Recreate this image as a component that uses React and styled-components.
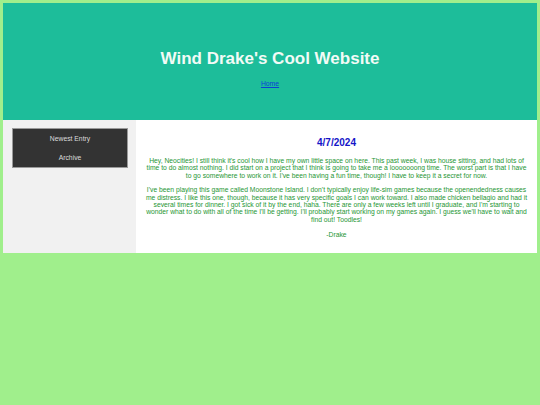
import React from "react";
import styled, { createGlobalStyle } from "styled-components";

const GlobalStyle = createGlobalStyle`
  html, body {
    margin: 0;
    padding: 0;
    background: #a0ef8c;
    font-family: "Liberation Sans", Arial, sans-serif;
  }
`;

const Page = styled.div`
  margin: 3px;
  width: 534px;
  box-sizing: border-box;
`;

const Header = styled.header`
  height: 117px;
  background: #1dbd9a;
  display: flex;
  flex-direction: column;
  align-items: center;
  box-sizing: border-box;
  padding-top: 46px;
`;

const Title = styled.h1`
  margin: 0;
  font-size: 17px;
  line-height: 20px;
  font-weight: bold;
  color: #f2fbf6;
`;

const HomeLink = styled.a`
  margin-top: 11px;
  font-size: 6.8px;
  line-height: 8px;
  color: #0a3fd6;
  text-decoration: underline;
`;

const Body = styled.div`
  display: flex;
`;

const Sidebar = styled.aside`
  width: 133px;
  flex-shrink: 0;
  background: #f1f1f1;
  box-sizing: border-box;
  padding: 8px 8px 0 9px;
`;

const NavBox = styled.nav`
  background: #333333;
  border: 1px solid #9a9a9a;
  display: flex;
  flex-direction: column;
  align-items: center;
  padding: 6px 0 5px;
  gap: 11px;
`;

const NavItem = styled.a`
  font-size: 6.8px;
  line-height: 8px;
  color: #dcdcdc;
  text-decoration: none;
`;

const Main = styled.main`
  flex: 1;
  background: #ffffff;
  padding: 17px 9px 14px;
  text-align: center;
`;

const EntryDate = styled.h2`
  margin: 0 0 8px;
  font-size: 10px;
  line-height: 12px;
  font-weight: bold;
  color: #1515c8;
`;

const Para = styled.p`
  margin: 0 0 ${(p) => p.$gap ?? 7.5}px;
  font-size: 6.75px;
  line-height: 7.33px;
  color: #269634;
`;

export default function App() {
  return (
    <>
      <GlobalStyle />
      <Page>
        <Header>
          <Title>Wind Drake's Cool Website</Title>
          <HomeLink href="#">Home</HomeLink>
        </Header>
        <Body>
          <Sidebar>
            <NavBox>
              <NavItem href="#">Newest Entry</NavItem>
              <NavItem href="#">Archive</NavItem>
            </NavBox>
          </Sidebar>
          <Main>
            <EntryDate>4/7/2024</EntryDate>
            <Para>
              Hey, Neocities! I still think it's cool how I have my own little
              space on here. This past week, I was house sitting, and had lots
              of time to do almost nothing. I did start on a project that I
              think is going to take me a looooooong time. The worst part is
              that I have to go somewhere to work on it. I've been having a fun
              time, though! I have to keep it a secret for now.
            </Para>
            <Para $gap={8.3}>
              I've been playing this game called Moonstone Island. I don't
              typically enjoy life-sim games because the openendedness causes me
              distress. I like this one, though, because it has very specific
              goals I can work toward. I also made chicken bellagio and had it
              several times for dinner. I got sick of it by the end, haha. There
              are only a few weeks left until I graduate, and I'm starting to
              wonder what to do with all of the time I'll be getting. I'll
              probably start working on my games again. I guess we'll have to
              wait and find out! Toodles!
            </Para>
            <Para $gap={0}>-Drake</Para>
          </Main>
        </Body>
      </Page>
    </>
  );
}
